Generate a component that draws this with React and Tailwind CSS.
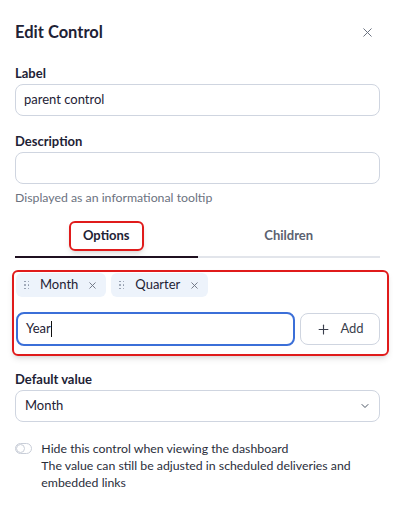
import { X, Plus, ChevronDown } from "lucide-react";

const font = { fontFamily: 'Lato, "Segoe UI", sans-serif' };

function Chip({ label }) {
  return (
    <div className="flex items-center h-[24px] rounded-md bg-[#edf3fb] pl-[8px] pr-[8px]">
      <span className="grid grid-cols-2 gap-x-[2px] gap-y-[2px] mr-[11px]">
        {[0, 1, 2, 3, 4, 5].map((i) => (
          <span key={i} className="w-[1.5px] h-[1.5px] bg-[#8a94a6] rounded-full" />
        ))}
      </span>
      <span className="text-[13px] text-[#1e2235]">{label}</span>
      <X className="w-[11px] h-[11px] ml-[9px] text-[#6b7280]" strokeWidth={2} />
    </div>
  );
}

export default function App() {
  return (
    <div className="w-[393px] h-[515px] overflow-hidden bg-white text-[#1e2235]" style={font}>
      <div className="pl-[15px] pr-[13px]">
        {/* header */}
        <div className="flex items-center justify-between pt-[21px] h-[44px]">
          <h1 className="text-[16.5px] font-bold leading-none">Edit Control</h1>
          <X className="w-[15px] h-[15px] mr-[5px] text-[#6b7280]" strokeWidth={1.6} />
        </div>

        <div className="mt-[20px] text-[13px] font-bold leading-[18px]">Label</div>
        <div className="mt-[2px] h-[32px] rounded-lg border border-[#cfd5e0] flex items-center px-[8px] text-[13px]">
          parent control
        </div>

        <div className="mt-[16px] text-[13px] font-bold leading-[18px]">Description</div>
        <div className="mt-[2px] h-[32px] rounded-lg border border-[#cfd5e0]" />
        <div className="mt-[5px] text-[12.3px] text-[#6b7280] leading-[18px]">
          Displayed as an informational tooltip
        </div>

        {/* tabs */}
        <div className="mt-[14px] flex">
          <div className="flex-1 flex flex-col items-center">
            <div className="h-[30px] px-[12px] flex items-center rounded-md border-2 border-[#e01b1b] shadow-md text-[13px] font-bold">
              Options
            </div>
            <div className="self-stretch mt-[5px] h-[2px] bg-[#1f1020]" />
          </div>
          <div className="flex-1 flex flex-col items-center">
            <div className="h-[30px] px-[12px] flex items-center text-[13px] font-bold text-[#5b6170]">
              Children
            </div>
            <div className="self-stretch mt-[5px] h-[2px] bg-[#e2e5eb]" />
          </div>
        </div>

        {/* options editor */}
        <div className="mt-[12px] -ml-[3px] -mr-[9px] border-2 border-[#e01b1b] rounded-md shadow-md pl-[2px] pr-[7px] pt-[1px] pb-[8px]">
          <div className="flex gap-[5px]">
            <Chip label="Month" />
            <Chip label="Quarter" />
          </div>
          <div className="mt-[15px] flex gap-[5px] items-center">
            <div className="flex-1 h-[34px] rounded-lg border-2 border-[#3b6fd8] flex items-center px-[8px] text-[13px]">
              Year<span className="w-[1px] h-[16px] bg-[#111]" />
            </div>
            <div className="w-[80px] h-[32px] rounded-lg border border-[#cfd5e0] flex items-center justify-center gap-[9px] text-[13px] text-[#3a3f4d]">
              <Plus className="w-[15px] h-[15px]" strokeWidth={1.8} />
              Add
            </div>
          </div>
        </div>

        <div className="mt-[14px] text-[13px] font-bold leading-[18px]">Default value</div>
        <div className="mt-[2px] h-[32px] rounded-lg border border-[#cfd5e0] flex items-center justify-between pl-[9px] pr-[8px] text-[13px]">
          Month
          <ChevronDown className="w-[12px] h-[12px] text-[#4b5563]" strokeWidth={2} />
        </div>

        {/* toggle */}
        <div className="mt-[18px] flex items-start gap-[9px]">
          <div className="mt-[3px] w-[20px] h-[11px] rounded-full border border-[#c9ced8] flex items-center">
            <span className="w-[9px] h-[9px] rounded-full border border-[#c9ced8]" />
          </div>
          <div className="text-[12.3px] leading-[17px] text-[#2a2e3b]">
            <div>Hide this control when viewing the dashboard</div>
            <div>The value can still be adjusted in scheduled deliveries and embedded links</div>
          </div>
        </div>

        <div className="mt-[26px] h-[1px] bg-[#e5e7eb]" />
      </div>
    </div>
  );
}
